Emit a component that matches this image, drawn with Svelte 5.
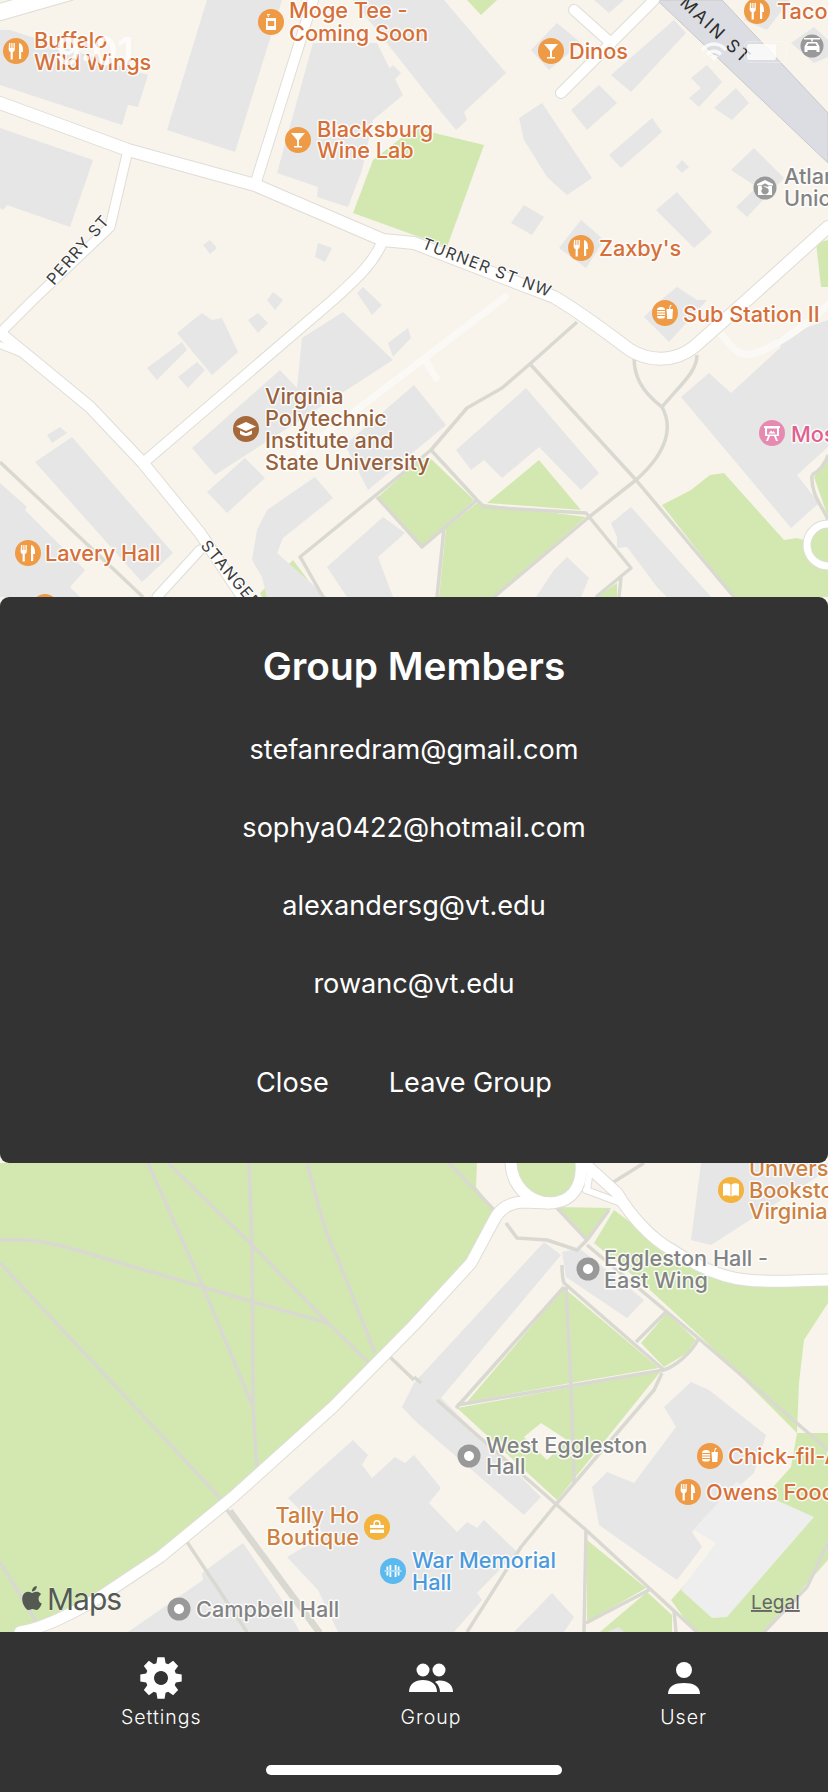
<script>
  const greens = [
    '414,128 484,145 447,247 353,213 373,160', '467,0 497,0 481,15',
    '429,457 474,500 422,547 378,497 414,465', '539,460 581,510 487,503',
    '446,528 477,503 586,517 494,597 439,597', '662,505 691,490 710,475 724,473 784,540 797,538 828,547 828,597 734,597',
    '814,477 824,460 828,458 828,517', '260,593 293,560 308,580 298,597 262,597', '597,597 617,583 617,597',
    '816,243 828,240 828,287 821,287',
    '0,1163 477,1163 476,1187 497,1213 494,1220 471,1263 414,1325 333,1407 233,1497 160,1557 100,1597 20,1632 0,1632',
    '557,1207 611,1208 589,1240', '594,1243 614,1210 654,1240 694,1265 747,1282 828,1280 828,1303 804,1340 799,1383 797,1433 701,1337 650,1290',
    '797,1433 828,1433 828,1560 764,1632 694,1632 671,1600 791,1467',
    '564,1288 659,1368 571,1383 467,1402', '457,1408 661,1371 557,1500', '641,1343 667,1313 696,1340 687,1353 664,1367',
    '587,1540 646,1588 587,1622', '600,1632 647,1592 672,1615 672,1632', '177,1632 217,1597 240,1632'
  ];
  const beige = ['524,1437 541,1423 567,1440 547,1460', '222,1590 237,1580 273,1632 242,1632'];
  const buildings = [
    '0,30 10,30 148,75 138,107 128,105 122,125 0,85', '207,0 282,0 235,152 167,130',
    '0,128 93,160 70,227 7,205 3,210 0,208',
    '313,43 377,43 403,95 373,120 362,170 348,207 317,197 318,187 277,173', '385,73 393,65 401,73 393,81',
    '353,0 444,0 506,73 464,112 467,120 456,130 442,113', '531,50 557,23 581,43 549,70', '594,0 624,0 609,13',
    '611,75 674,20 686,33 631,92', '571,110 599,85 617,103 587,130', '519,118 542,103 592,178 567,195 547,177 524,140',
    '609,155 652,118 662,132 621,168', '676,167 682,160 689,167 682,173',
    '691,78 707,65 722,82 699,107 689,98 701,88', '714,108 736,88 749,103 732,120',
    '731,170 754,148 784,178 747,217 736,207 757,187', '656,210 677,192 712,232 694,248', '511,223 524,205 544,217 532,235',
    '559,248 581,220 604,240 586,268', '744,20 761,0 790,0 767,30', '791,43 814,27 828,40 828,57 814,63',
    '644,317 661,300 677,287 697,300 707,300 669,342',
    '681,397 709,373 731,393 781,347 777,338 828,320 828,447 797,475 819,503 791,528',
    '456,450 526,388 599,473 581,490 539,447 502,478 484,460 471,470', '345,445 414,385 446,425 368,490',
    '611,523 631,507 711,597 667,597 657,587 627,547 617,548 617,537',
    '536,597 554,570 567,557 589,578 581,597',
    '192,448 280,370 297,388 302,338 343,312 393,360 215,475', '388,343 408,328 411,338 393,357',
    '207,492 245,458 265,478 227,513', '267,510 315,477 333,498 283,538 277,553 327,597 267,597 262,577 252,560 257,530',
    '327,567 383,517 405,533 378,557 393,597 347,597',
    '147,368 182,342 187,350 157,380', '177,333 202,313 212,320 222,318 238,352 212,375', '178,377 197,362 205,370 188,388',
    '248,320 258,313 268,323 258,333', '267,300 273,292 283,300 275,310', '357,293 363,287 382,305 372,315',
    '203,245 210,240 217,248 210,254', '315,257 318,243 332,248 325,262',
    '47,435 60,427 67,433 52,443', '35,462 72,437 173,553 142,582', '0,483 27,507 25,510 85,570 70,587 80,597 0,597',
    '701,1163 828,1163 828,1170 711,1245 691,1240',
    '544,1242 561,1255 441,1398 541,1497 524,1515 414,1420 402,1407 414,1383',
    '562,1252 579,1248 644,1300 627,1318 566,1277',
    '664,1407 691,1382 709,1390 766,1435 754,1473 707,1515 692,1532 702,1547 677,1580 599,1525 592,1487 607,1472 634,1483 676,1427',
    '288,1498 353,1440 368,1455 362,1465 372,1478 395,1457 405,1463 414,1455 441,1488 429,1503 457,1532 467,1522 477,1528 484,1520 517,1552 477,1593 482,1600 454,1632 338,1632 318,1590 287,1557 325,1535',
    '514,1632 552,1593 574,1617 564,1632', '607,1632 619,1627 624,1632',
    '128,1632 203,1580 202,1573 243,1543 280,1597 300,1632'
  ];
  const light = ['736,1482 814,1517 727,1617 712,1618 681,1590 716,1543 694,1530'];

  const paths = [
    'M577 322L531 363L502 388L467 408L431 450L414 464L300 557L302 560L323 597',
    'M531 365L636 480L734 597',
    'M634 357C634 375 640 390 662 407C672 425 670 450 636 480L589 517L494 597',
    'M697 355C697 372 680 385 662 407',
    'M431 450L477 500L484 507L586 513L631 568L596 597M621 577L619 597',
    'M377 497L422 547L477 500M444 528L437 597M0 462L143 597',
    'M812 475C820 470 825 465 828 455M812 475C810 495 825 510 828 520',
    'M148 1163L203 1287L253 1407M168 1163L250 1243L328 1323L368 1362M249 1163L252 1243L253 1407L257 1470',
    'M307 1163C317 1200 325 1235 337 1257L375 1353',
    'M0 1240C40 1238 60 1245 100 1257L203 1287L253 1302L328 1323',
    'M0 1263L222 1500M0 1562L37 1623M227 1510L317 1632M231 1510L321 1632M187 1542L247 1632M390 1357L414 1380',
    'M449 1163L497 1213M506 1223L517 1238L547 1240L577 1250L587 1240L557 1208M587 1240L609 1210M612 1183L644 1163',
    'M587 1245L697 1337L828 1450M562 1265C562 1275 563 1280 564 1283L664 1370M564 1287L456 1408M566 1287L571 1387L574 1483',
    'M457 1405L664 1370M636 1342L666 1312M664 1370C675 1366 690 1355 699 1338',
    'M662 1373L654 1390L557 1503L521 1547L467 1632M437 1400L557 1505L586 1530L697 1632',
    'M414 1377L421 1383M586 1530L584 1632M586 1623L649 1590M674 1610L676 1632M764 1632L807 1587L828 1543'
  ];
  const roads = [
    { d: 'M0 12L70 -8', w: 16 },
    { d: 'M255 185L313 0', w: 10 },
    { d: 'M128 150L110 227L33 300L0 333', w: 9 },
    { d: 'M383 240C375 262 355 280 333 300L143 463', w: 10 },
    { d: 'M0 333L33 360L90 407L143 463L200 533L240 593', w: 11 },
    { d: 'M0 345L33 358', w: 6 },
    { d: 'M200 550L157 597', w: 9 },
    { d: 'M574 10L611 43', w: 10 },
    { d: 'M654 0L561 93', w: 10 },
    { d: 'M0 103L128 150L255 185L383 240L414 243L554 297C580 312 610 335 630 350C650 362 675 362 694 347L747 300L828 227', w: 12 },
    { d: 'M511 1163C512 1185 528 1202 549 1203C570 1203 583 1188 581 1163', w: 11 },
    { d: 'M584 1163L617 1193C630 1215 650 1238 672 1250C695 1265 720 1278 747 1280C775 1283 800 1280 828 1280', w: 11 },
    { d: 'M586 1190L621 1203', w: 6 },
    { d: 'M20 1632C45 1628 75 1612 100 1597L160 1557L233 1497L333 1407L414 1325L471 1263L494 1220C500 1208 510 1203 522 1202L549 1203', w: 11 },
    { d: 'M590 1170L587 1190', w: 6 }
  ];

  const icons = {
    fork: 'M-7-8h1.3v5h1v-5h1.2v5h1v-5h1.3v6.5q0 2-2 2.5v7.5h-2.2v-7.5q-2-.5-2-2.5zM3-8q4 1 4 7v2h-1.8v7h-2.2z',
    cup: 'M-5-4h10v12h-10zM-3.2-1v5h6.4v-5zM-3-5l-1-3h3v1h-1.6l.6 2z',
    martini: 'M-7-7h14l-6 7v6h3v1.5h-8v-1.5h3v-6z',
    food: 'M-8-3q0-3 4-3t4 3zM-8-2h8v1.5h-8zM-8 .5h8v1.5h-8zM-8 3h8q0 2.5-2 2.5h-4q-2 0-2-2.5zM1.5-4h6.5l-.7 10h-5.1zM4-4l1-4h1.5v1h-.7l-.8 3z',
    bank: 'M0-8l8 4v1.5h-16v-1.5zM-7-2h14v9h-14zM0-.5a3.5 3.5 0 1 0 .01 0z',
    car: 'M-8-8h16v1.5h-7.2v2h-1.6v-2h-7.2zM-5-4h10l2.5 4.5v5.5h-3v-2h-9v2h-3v-5.500zM-3.600-2.500l-1.400 2.500h10l-1.400-2.500z',
    cap: 'M0-7l10 4.500-10 4.500-10-4.500zM-6 1.500l6 2.700 6-2.700v3.500q-6 4-12 0z',
    easel: 'M-8-7h16v2h-1v8h-3l2 5h-2l-2-5h-4l-2 5h-2l2-5h-3v-8h-1zM-5-4.500v6h10v-6zM-3.500.5l2.500-3 1.500 1.500 1-1 2 2.500z',
    ring: 'M0-5a5 5 0 1 0 .01 0z',
    book: 'M-8-6q4-1.500 7.500.5v12q-3.500-2-7.500-.5zM8-6q-4-1.500-7.500.5v12q3.500-2 7.500-.5z',
    bag: 'M-7-2h14v3h-14zM-7 2.500h14v3.500h-14zM-3.500-2v-2q0-3 3.500-3t3.500 3v2h-1.500v-2q0-1.500-2-1.500t-2 1.500v2z',
    bar: 'M-8.500-.6h17v1.200h-17zM-6.500-4.500h1.800v9h-1.800zM-3.500-6h1.800v12h-1.800zM1.700-6h1.800v12h-1.800zM4.700-4.500h1.800v9h-1.800z'
  };

  const orange = '#ef9a45', gray = '#999999';
  const pois = [
    { x: 16, y: 51, c: orange, i: 'fork' }, { x: 271, y: 22, c: orange, i: 'cup' }, { x: 298, y: 140, c: orange, i: 'martini' },
    { x: 551, y: 51, c: orange, i: 'martini' }, { x: 757, y: 11, c: orange, i: 'fork' }, { x: 765, y: 188, c: gray, i: 'bank' },
    { x: 812, y: 46, c: gray, i: 'car' }, { x: 581, y: 248, c: orange, i: 'fork' }, { x: 665, y: 313, c: orange, i: 'food' },
    { x: 246, y: 429, c: '#a5693c', i: 'cap' }, { x: 772, y: 433, c: '#e78ab2', i: 'easel' }, { x: 28, y: 553, c: orange, i: 'fork' },
    { x: 45, y: 607, c: orange, i: 'fork' },
    { x: 731, y: 1190, c: '#f3b33d', i: 'book' }, { x: 588, y: 1269, c: gray, i: 'ring' }, { x: 469, y: 1456, c: gray, i: 'ring' },
    { x: 710, y: 1456, c: orange, i: 'food' }, { x: 688, y: 1492, c: orange, i: 'fork' }, { x: 393, y: 1571, c: '#5ab9ee', i: 'bar' },
    { x: 377, y: 1527, c: '#f3b33d', i: 'bag' }, { x: 179, y: 1609, c: gray, i: 'ring' }
  ];

  const labels = [
    { x: 34, t: 'food', l: [['Buffalo', 48], ['Wild Wings', 70]] },
    { x: 289, t: 'food', l: [['Moge Tee -', 18], ['Coming Soon', 41]] },
    { x: 317, t: 'food', l: [['Blacksburg', 137], ['Wine Lab', 158]] },
    { x: 569, t: 'food', l: [['Dinos', 59]] },
    { x: 777, t: 'food', l: [['Taco', 19]] },
    { x: 784, t: 'place', l: [['Atlantic', 184], ['Union', 206]] },
    { x: 599, t: 'food', l: [["Zaxby's", 256]] },
    { x: 683, t: 'food', l: [['Sub Station II', 322]] },
    { x: 265, t: 'school', l: [['Virginia', 404], ['Polytechnic', 426], ['Institute and', 448], ['State University', 470]] },
    { x: 791, t: 'art', l: [['Moss', 442]] },
    { x: 45, t: 'food', l: [['Lavery Hall', 561]] },
    { x: 749, t: 'shop', l: [['University', 1176], ['Bookstore', 1198], ['Virginia', 1219]] },
    { x: 604, t: 'place', l: [['Eggleston Hall -', 1266], ['East Wing', 1288]] },
    { x: 486, t: 'place', l: [['West Eggleston', 1453], ['Hall', 1474]] },
    { x: 728, t: 'food', l: [['Chick-fil-A', 1464]] },
    { x: 706, t: 'food', l: [['Owens Food Court', 1500]] },
    { x: 412, t: 'gym', l: [['War Memorial', 1568], ['Hall', 1590]] },
    { x: 359, t: 'shop end', l: [['Tally Ho', 1523], ['Boutique', 1545]] },
    { x: 196, t: 'place', l: [['Campbell Hall', 1617]] }
  ];

  const streets = [
    { t: 'PERRY ST', x: 54, y: 286, r: -49, k: '' },
    { t: 'TURNER ST NW', x: 421, y: 248, r: 21, k: '' },
    { t: 'STANGER ST', x: 200, y: 546, r: 50, k: '' },
    { t: 'MAIN ST', x: 679, y: 4, r: 43, k: 'main' }
  ];

  const members = ['stefanredram@gmail.com', 'sophya0422@hotmail.com', 'alexandersg@vt.edu', 'rowanc@vt.edu'];

  function gear() {
    const n = 8, R = 21, r = 15.5;
    let d = '';
    for (let i = 0; i < n; i++) {
      const a = (i * 2 * Math.PI) / n - Math.PI / 2;
      const s = [[-0.3, r], [-0.17, R], [0.17, R], [0.3, r]];
      s.forEach(([o, q]) => {
        d += `${d ? 'L' : 'M'}${(q * Math.cos(a + o)).toFixed(2)} ${(q * Math.sin(a + o)).toFixed(2)}`;
      });
    }
    return d + 'ZM0 -7a7 7 0 1 0 .01 0Z';
  }
</script>

<div class="screen">
  <main class="map">
    <svg class="canvas" viewBox="0 0 828 1632" width="828" height="1632">
      <rect width="828" height="1632" fill="#f8f4ec" />
      {#each greens as g}<polygon points={g} fill="#d2e8b0" />{/each}
      <circle cx="549" cy="1165" r="36" fill="#d2e8b0" />
      <circle cx="828" cy="545" r="18" fill="#d2e8b0" />
      {#each beige as g}<polygon points={g} fill="#f8f4ec" />{/each}
      {#each buildings as b}<polygon points={b} fill="#e6e6e6" />{/each}
      {#each light as b}<polygon points={b} fill="#eeeeee" />{/each}
      <polygon points="722,0 828,113 828,163 657,0" fill="#dcdde2" stroke="#c9c9c9" stroke-width="1" />
      <path d="M300 453L505 297M427 363L436 378" class="pale" />
      {#each paths as d}<path {d} class="foot" />{/each}
      <path d="M717 330C728 340 735 358 752 354C770 350 800 330 828 305" class="pale" />
      {#each roads as r}<path d={r.d} class="casing" stroke-width={r.w + 2} />{/each}
      {#each roads as r}<path d={r.d} class="road" stroke-width={r.w} />{/each}
      <circle cx="828" cy="545" r="21" fill="none" stroke="#deddd6" stroke-width="9" />
      <circle cx="828" cy="545" r="21" fill="none" stroke="#fff" stroke-width="7" />

      {#each streets as s}
        <text class="street {s.k}" transform="translate({s.x} {s.y}) rotate({s.r})">{s.t}</text>
      {/each}

      {#each labels as lab}
        {#each lab.l as [text, y]}
          <text class="label {lab.t}" x={lab.x} {y}>{text}</text>
        {/each}
      {/each}
      {#each pois as p}
        <g transform="translate({p.x} {p.y})">
          <circle r={p.c === gray ? 11.5 : 13} fill={p.c} />
          <path d={icons[p.i]} fill="#fff" fill-rule="evenodd" />
          {#if p.i === 'bank'}<text class="dollar" y="5" fill="#999">$</text>{/if}
        </g>
      {/each}

      <path class="apple" transform="translate(20 1586)" d="M12.152 6.896c-.948 0-2.415-1.078-3.96-1.04-2.04.027-3.91 1.183-4.961 3.014-2.117 3.675-.546 9.103 1.519 12.09 1.013 1.454 2.208 3.09 3.792 3.039 1.52-.065 2.09-.987 3.935-.987 1.831 0 2.35.987 3.96.948 1.637-.026 2.676-1.48 3.676-2.948 1.156-1.688 1.636-3.325 1.662-3.415-.039-.013-3.182-1.221-3.22-4.857-.026-3.04 2.48-4.494 2.597-4.559-1.429-2.09-3.623-2.324-4.39-2.376-2-.156-3.675 1.09-4.61 1.09zM15.53 3.83c.843-1.012 1.4-2.427 1.245-3.83-1.207.052-2.662.805-3.532 1.818-.78.896-1.454 2.338-1.273 3.714 1.338.104 2.715-.688 3.559-1.701" />
      <text class="maps" x="47" y="1610">Maps</text>
      <text class="legal" x="751" y="1609">Legal</text>
    </svg>

    <div class="status">
      <span class="time">9:01</span>
      <div class="status-right">
        <svg width="28" height="22" viewBox="0 0 28 22" class="wifi">
          <path d="M2 9C9 1 19 1 26 9M7 13.500C11 9 17 9 21 13.500" fill="none" stroke="#fff" stroke-width="3.500" />
          <path d="M14 20l-4-4.500c2-2 6-2 8 0z" fill="#fff" />
        </svg>
        <div class="battery"><div class="battery-fill"></div></div>
      </div>
    </div>
  </main>

  <section class="dialog">
    <h2>Group Members</h2>
    <ul>
      {#each members as m}<li>{m}</li>{/each}
    </ul>
    <div class="actions">
      <button>Close</button>
      <button>Leave Group</button>
    </div>
  </section>

  <nav class="tabs">
    <div class="tab">
      <svg width="44" height="44" viewBox="-22 -22 44 44"><path d={gear()} fill="#fff" fill-rule="evenodd" /></svg>
      <span>Settings</span>
    </div>
    <div class="tab">
      <svg width="46" height="44" viewBox="0 0 46 44">
        <circle cx="15" cy="14" r="6.500" fill="#fff" />
        <circle cx="31" cy="14" r="6.500" fill="#fff" />
        <path d="M1 36c0-8 6-12 14-12s14 4 14 12z" fill="#fff" />
        <path d="M32 36c0-4-2-8-5-10 1.500-1 3-1.500 5-1.500 7 0 13 4 13 11.500z" fill="#fff" />
      </svg>
      <span>Group</span>
    </div>
    <div class="tab">
      <svg width="44" height="44" viewBox="0 0 44 44">
        <circle cx="22" cy="14" r="8" fill="#fff" />
        <path d="M6 38c0-8 7-11 16-11s16 3 16 11z" fill="#fff" />
      </svg>
      <span>User</span>
    </div>
    <div class="home"></div>
  </nav>
</div>

<style>
  :global(body) { margin: 0; }
  .screen {
    position: relative;
    width: 828px;
    height: 1792px;
    display: flex;
    flex-direction: column;
    overflow: hidden;
    font-family: Inter, "Liberation Sans", sans-serif;
    background: #333;
  }
  .map { position: relative; height: 1632px; flex: none; overflow: hidden; }
  .canvas { display: block; }
  .foot { fill: none; stroke: #d9d9d1; stroke-width: 3.5; stroke-linejoin: round; }
  .pale { fill: none; stroke: #fbf9f5; stroke-width: 7; stroke-linecap: round; }
  .casing { fill: none; stroke: #deddd6; stroke-linejoin: round; stroke-linecap: round; }
  .road { fill: none; stroke: #fff; stroke-linejoin: round; stroke-linecap: round; }
  .label {
    font-size: 21.7px;
    font-weight: 500;
    paint-order: stroke;
    stroke: rgba(255, 255, 255, 0.85);
    stroke-width: 3px;
    stroke-linejoin: round;
  }
  .food { fill: #d66f38; }
  .place { fill: #838383; }
  .school { fill: #97613d; }
  .art { fill: #e0608f; }
  .shop { fill: #cd8040; }
  .gym { fill: #4a9adc; }
  .end { text-anchor: end; }
  .street {
    font-size: 16px;
    letter-spacing: 1.3px;
    fill: #3c3c3c;
    paint-order: stroke;
    stroke: #fff;
    stroke-width: 2px;
  }
  .main { font-size: 17.5px; letter-spacing: 2.4px; fill: #2e2e2e; stroke: none; }
  .dollar { font-size: 12px; font-weight: 700; text-anchor: middle; }
  .apple { fill: #545a52; }
  .maps { font-size: 30px; fill: #545a52; letter-spacing: -1px; paint-order: stroke; stroke: rgba(255,255,255,.6); stroke-width: 1px; }
  .legal { font-size: 19px; fill: #666; text-decoration: underline; }

  .status {
    position: absolute;
    left: 0;
    right: 0;
    top: 34px;
    display: flex;
    justify-content: space-between;
    align-items: center;
    padding: 0 41px 0 56px;
    opacity: 0.8;
    pointer-events: none;
  }
  .time { font-size: 38px; font-weight: 600; color: #fff; line-height: 34px; }
  .status-right { display: flex; align-items: center; gap: 16px; margin-top: 2px; }
  .battery {
    width: 43px;
    height: 22px;
    box-sizing: border-box;
    border: 1.500px solid rgba(255, 255, 255, 0.4);
    border-radius: 5px;
    padding: 2px;
  }
  .battery-fill { width: 78%; height: 100%; background: #fff; border-radius: 2px; }

  .dialog {
    position: absolute;
    top: 597px;
    left: 0;
    right: 0;
    height: 566px;
    box-sizing: border-box;
    padding-top: 48px;
    background: #333;
    border-radius: 9px;
    color: #fff;
    text-align: center;
  }
  h2 { margin: 0; font-size: 38.8px; line-height: 42px; font-weight: 600; }
  ul { list-style: none; margin: 24px 0 0; padding: 0; }
  li { height: 78px; line-height: 78px; font-size: 27.1px; font-weight: 400; }
  .actions { display: flex; justify-content: center; gap: 60px; margin-top: 40px; padding-right: 20px; }
  button {
    all: unset;
    font-size: 27.1px;
    line-height: 40px;
    color: #fff;
  }

  .tabs {
    position: relative;
    flex: none;
    height: 160px;
    box-sizing: border-box;
    display: flex;
    justify-content: space-between;
    padding: 24px 121px 0;
    background: #333;
    color: #fff;
  }
  .tab { display: flex; flex-direction: column; align-items: center; gap: 6px; }
  .tab svg { display: block; }
  .tab span { font-size: 19.5px; font-weight: 300; letter-spacing: 1px; line-height: 22px; }
  .home {
    position: absolute;
    left: 266px;
    top: 133px;
    width: 296px;
    height: 10px;
    border-radius: 5px;
    background: #fff;
  }
</style>
